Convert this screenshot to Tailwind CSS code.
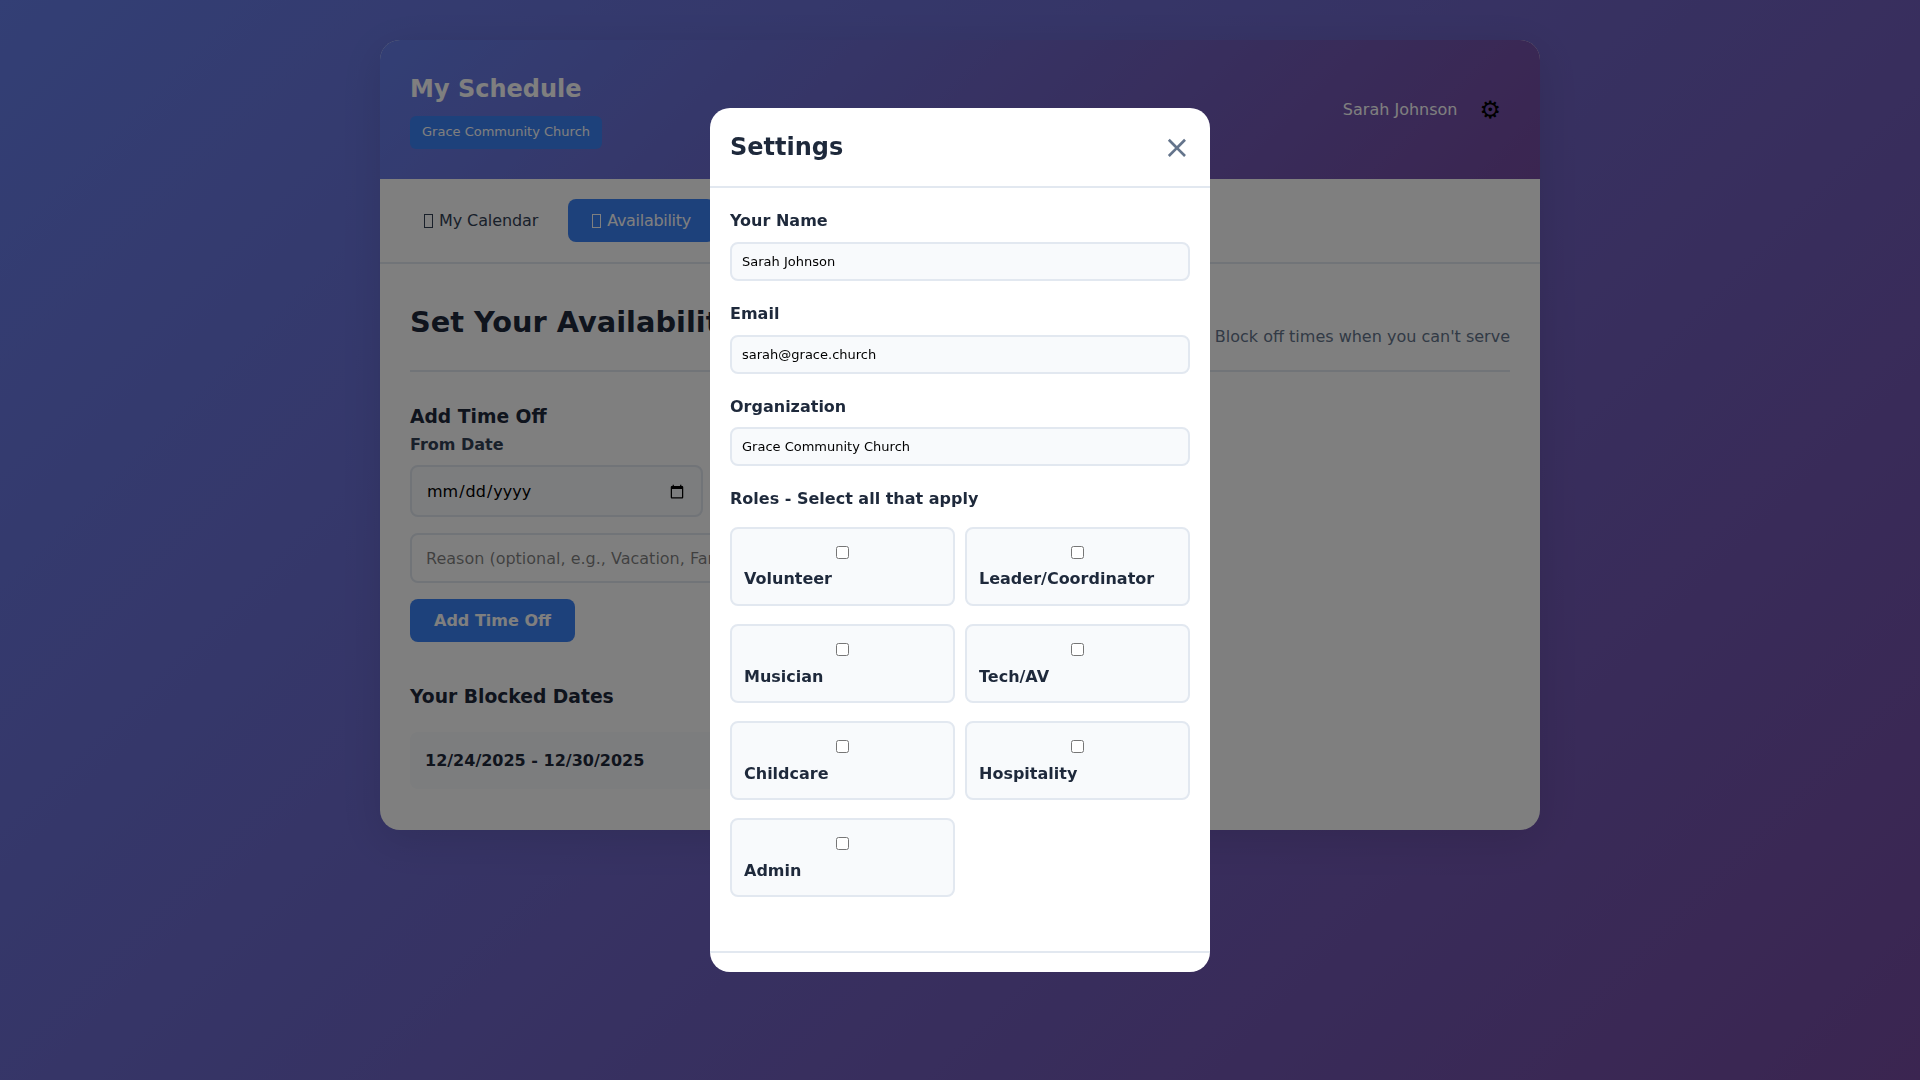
<!DOCTYPE html>
<html lang="en">

<head>
  <meta charset="UTF-8">
  <title>My Schedule</title>
  <script src="https://cdn.jsdelivr.net/npm/@tailwindcss/browser@4"></script>
</head>

<body class="min-h-screen bg-[linear-gradient(135deg,#667eea_0%,#764ba2_100%)] font-['DejaVu_Sans',sans-serif]">
  <div class="h-[1080px] overflow-hidden pt-10">
    <div class="mx-auto w-[1160px] h-[790px] overflow-hidden rounded-[20px] bg-white shadow-[0_10px_40px_rgba(0,0,0,0.1)]">
      <header class="flex h-[139px] items-center justify-between bg-[linear-gradient(135deg,#667eea_0%,#764ba2_100%)] px-[30px] text-white">
        <div class="self-start pt-[35px]">
          <h1 class="text-[24px] font-bold leading-[29px]">My Schedule</h1>
          <span class="mt-[12px] block w-fit rounded-md bg-[#3b82f6] px-3 pt-[7px] pb-[9px] text-[13px] leading-[17px]">Grace Community Church</span>
        </div>
        <div class="flex items-center gap-[22px] pr-[9px]">
          <span class="text-[16px]">Sarah Johnson</span>
          <button class="text-[24px] leading-none text-black">⚙</button>
        </div>
      </header>

      <nav class="flex h-[85px] gap-[6px] border-b-2 border-[#e2e8f0] p-5">
        <button class="h-[43px] rounded-lg px-6 text-[16px] leading-[19px] tracking-[-0.1px] text-[#334155]"><span class="mr-[6px] inline-block h-[14px] w-[9px] border border-current align-[-2px]"></span>My Calendar</button>
        <button class="h-[43px] rounded-lg bg-[#3b82f6] px-6 text-[16px] leading-[19px] tracking-[-0.3px] text-white"><span class="mr-[6px] inline-block h-[14px] w-[9px] border border-current align-[-2px]"></span>Availability</button>
      </nav>

      <main class="px-[30px]">
        <div class="flex h-[108px] items-end justify-between border-b-2 border-[#e2e8f0] pb-6">
          <h2 class="mb-[7px] text-[28.8px] font-bold leading-[34px] text-[#1e293b]">Set Your Availability</h2>
          <p class="text-[16px] leading-[19px] text-[#64748b]">Block off times when you can't serve</p>
        </div>

        <h3 class="mt-[33px] text-[18.72px] font-bold leading-6 text-[#1e293b]">Add Time Off</h3>
        <label class="mt-[6px] block text-[16px] font-bold leading-[19px] text-[#334155]">From Date</label>
        <input type="date" class="mt-[11px] block h-[52px] w-[293px] rounded-lg border-2 border-[#e2e8f0] bg-[#f8fafc] px-[14px] pt-[2px] text-[16px]">
        <input type="text" placeholder="Reason (optional, e.g., Vacation, Family)" class="mt-4 block h-[50px] w-[600px] rounded-lg border-2 border-[#e2e8f0] px-[14px] text-[16px]">
        <button class="mt-4 block h-[43px] w-[165px] rounded-lg bg-[#3b82f6] text-[16px] font-bold text-white">Add Time Off</button>

        <h3 class="mt-[43px] text-[18.72px] font-bold leading-6 text-[#1e293b]">Your Blocked Dates</h3>
        <div class="mt-[23px] flex h-[57px] w-[600px] items-center rounded-lg bg-[#f8fafc] px-[15px]">
          <span class="text-[16px] font-bold text-[#1e293b]">12/24/2025 - 12/30/2025</span>
        </div>
      </main>
    </div>
  </div>

  <div class="fixed inset-0 flex items-center justify-center bg-black/50">
    <div class="flex h-[864px] w-[500px] flex-col overflow-hidden rounded-[20px] bg-white">
      <div class="flex h-[80px] shrink-0 items-center justify-between border-b-2 border-[#e2e8f0] pl-5 pr-[17px]">
        <h2 class="text-[24px] font-bold text-[#1e293b]">Settings</h2>
        <button class="flex h-8 w-8 items-center justify-center text-[32px] leading-none text-[#64748b]">×</button>
      </div>

      <div class="flex-1 px-5 pt-[23px]">
        <label class="block text-[16px] font-bold leading-5 text-[#1e293b]">Your Name</label>
        <input type="text" value="Sarah Johnson" class="mt-[11px] block h-[39px] w-full rounded-lg border-2 border-[#e2e8f0] bg-[#f8fafc] px-[10px] text-[13px] text-black">

        <label class="mt-[23px] block text-[16px] font-bold leading-5 text-[#1e293b]">Email</label>
        <input type="email" value="sarah@grace.church" class="mt-[11px] block h-[39px] w-full rounded-lg border-2 border-[#e2e8f0] bg-[#f8fafc] px-[10px] text-[13px] text-black">

        <label class="mt-[23px] block text-[16px] font-bold leading-5 text-[#1e293b]">Organization</label>
        <input type="text" value="Grace Community Church" class="mt-[10px] block h-[39px] w-full rounded-lg border-2 border-[#e2e8f0] bg-[#f8fafc] px-[10px] text-[13px] text-black">

        <label class="mt-[23px] block text-[16px] font-bold leading-5 text-[#1e293b]">Roles - Select all that apply</label>

        <div class="mt-[18px] grid grid-cols-2 gap-x-[10px] gap-y-[18px]">
          <label class="h-[79px] rounded-lg border-2 border-[#e2e8f0] bg-[#f8fafc] px-3 pt-[17px]">
            <input type="checkbox" class="mx-auto block">
            <span class="mt-[10px] block text-[16px] font-bold leading-5 text-[#1e293b]">Volunteer</span>
          </label>
          <label class="h-[79px] rounded-lg border-2 border-[#e2e8f0] bg-[#f8fafc] px-3 pt-[17px]">
            <input type="checkbox" class="mx-auto block">
            <span class="mt-[10px] block text-[16px] font-bold leading-5 text-[#1e293b]">Leader/Coordinator</span>
          </label>
          <label class="h-[79px] rounded-lg border-2 border-[#e2e8f0] bg-[#f8fafc] px-3 pt-[17px]">
            <input type="checkbox" class="mx-auto block">
            <span class="mt-[11px] block text-[16px] font-bold leading-5 text-[#1e293b]">Musician</span>
          </label>
          <label class="h-[79px] rounded-lg border-2 border-[#e2e8f0] bg-[#f8fafc] px-3 pt-[17px]">
            <input type="checkbox" class="mx-auto block">
            <span class="mt-[11px] block text-[16px] font-bold leading-5 text-[#1e293b]">Tech/AV</span>
          </label>
          <label class="h-[79px] rounded-lg border-2 border-[#e2e8f0] bg-[#f8fafc] px-3 pt-[17px]">
            <input type="checkbox" class="mx-auto block">
            <span class="mt-[11px] block text-[16px] font-bold leading-5 text-[#1e293b]">Childcare</span>
          </label>
          <label class="h-[79px] rounded-lg border-2 border-[#e2e8f0] bg-[#f8fafc] px-3 pt-[17px]">
            <input type="checkbox" class="mx-auto block">
            <span class="mt-[11px] block text-[16px] font-bold leading-5 text-[#1e293b]">Hospitality</span>
          </label>
          <label class="h-[79px] rounded-lg border-2 border-[#e2e8f0] bg-[#f8fafc] px-3 pt-[17px]">
            <input type="checkbox" class="mx-auto block">
            <span class="mt-[11px] block text-[16px] font-bold leading-5 text-[#1e293b]">Admin</span>
          </label>
        </div>
      </div>

      <div class="h-[21px] shrink-0 border-t-2 border-[#e2e8f0]"></div>
    </div>
  </div>
</body>

</html>
